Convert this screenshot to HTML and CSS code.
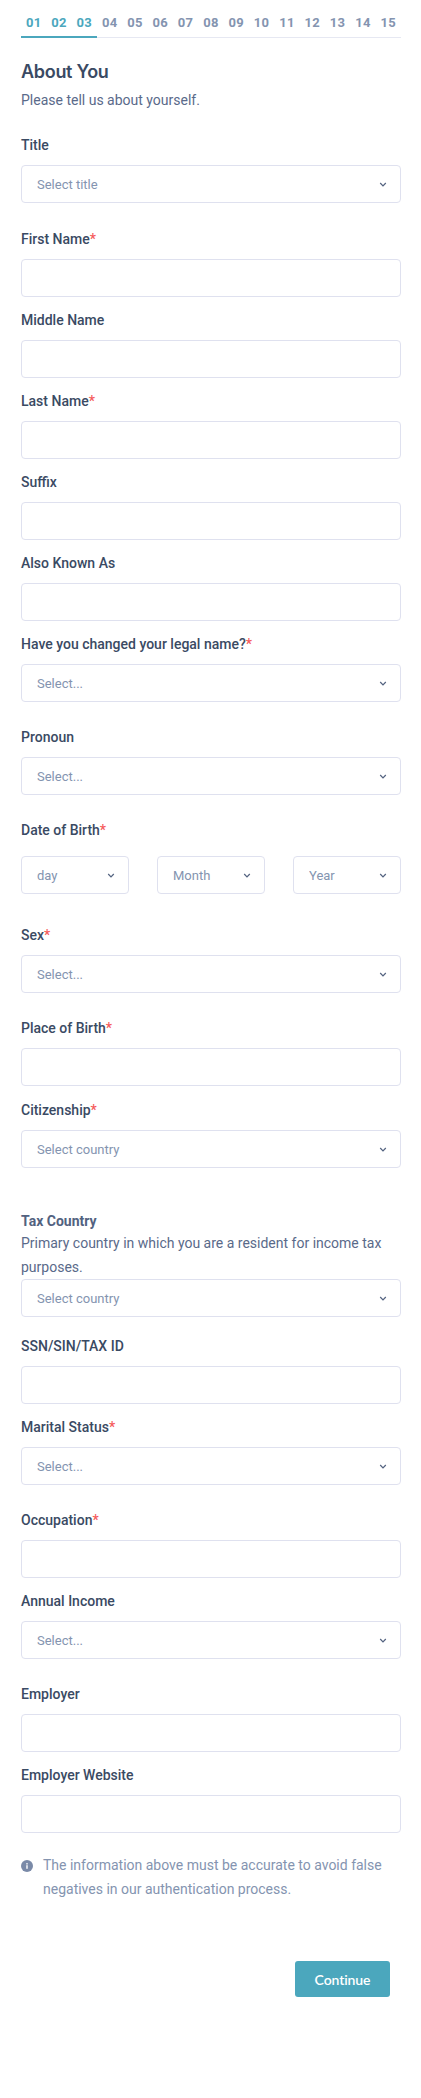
FILE: index.html
```html
<!DOCTYPE html>
<html lang="en">
<head>
    <meta charset="UTF-8">
    <meta name="viewport" content="width=device-width, initial-scale=1.0">
    <title>About You</title>
    <link rel="stylesheet" href="styles.css">
</head>
<body>
    <svg class="sprite" width="0" height="0">
        <symbol id="chevron" viewBox="0 0 8 5">
            <path d="M1.2 1l2.8 2.8 2.8-2.8" fill="none" stroke="currentColor" stroke-width="1.2"/>
        </symbol>
    </svg>

    <div class="page">
        <div class="steps">
            <span class="step done">01</span>
            <span class="step done">02</span>
            <span class="step done">03</span>
            <span class="step">04</span>
            <span class="step">05</span>
            <span class="step">06</span>
            <span class="step">07</span>
            <span class="step">08</span>
            <span class="step">09</span>
            <span class="step">10</span>
            <span class="step">11</span>
            <span class="step">12</span>
            <span class="step">13</span>
            <span class="step">14</span>
            <span class="step">15</span>
        </div>

        <h1>About You</h1>
        <p class="intro">Please tell us about yourself.</p>

        <form>
            <div class="field pick title-field">
                <label>Title</label>
                <div class="select">
                    <select><option>Select title</option></select>
                    <svg class="chevron"><use href="#chevron"/></svg>
                </div>
            </div>

            <div class="field">
                <label>First Name<span class="req">*</span></label>
                <input type="text">
            </div>

            <div class="field">
                <label>Middle Name</label>
                <input type="text">
            </div>

            <div class="field">
                <label>Last Name<span class="req">*</span></label>
                <input type="text">
            </div>

            <div class="field">
                <label>Suffix</label>
                <input type="text">
            </div>

            <div class="field">
                <label>Also Known As</label>
                <input type="text">
            </div>

            <div class="field pick">
                <label>Have you changed your legal name?<span class="req">*</span></label>
                <div class="select">
                    <select><option>Select...</option></select>
                    <svg class="chevron"><use href="#chevron"/></svg>
                </div>
            </div>

            <div class="field pick">
                <label>Pronoun</label>
                <div class="select">
                    <select><option>Select...</option></select>
                    <svg class="chevron"><use href="#chevron"/></svg>
                </div>
            </div>

            <div class="field date-field">
                <label>Date of Birth<span class="req">*</span></label>
                <div class="date-row">
                    <div class="select">
                        <select><option>day</option></select>
                        <svg class="chevron"><use href="#chevron"/></svg>
                    </div>
                    <div class="select">
                        <select><option>Month</option></select>
                        <svg class="chevron"><use href="#chevron"/></svg>
                    </div>
                    <div class="select">
                        <select><option>Year</option></select>
                        <svg class="chevron"><use href="#chevron"/></svg>
                    </div>
                </div>
            </div>

            <div class="field pick">
                <label>Sex<span class="req">*</span></label>
                <div class="select">
                    <select><option>Select...</option></select>
                    <svg class="chevron"><use href="#chevron"/></svg>
                </div>
            </div>

            <div class="field birth-field">
                <label>Place of Birth<span class="req">*</span></label>
                <input type="text">
            </div>

            <div class="field citizenship">
                <label>Citizenship<span class="req">*</span></label>
                <div class="select">
                    <select><option>Select country</option></select>
                    <svg class="chevron"><use href="#chevron"/></svg>
                </div>
            </div>

            <div class="field tax">
                <label class="tax-label">Tax Country</label>
                <p class="hint">Primary country in which you are a resident for income tax purposes.</p>
                <div class="select">
                    <select><option>Select country</option></select>
                    <svg class="chevron"><use href="#chevron"/></svg>
                </div>
            </div>

            <div class="field">
                <label>SSN/SIN/TAX ID</label>
                <input type="text">
            </div>

            <div class="field pick">
                <label>Marital Status<span class="req">*</span></label>
                <div class="select">
                    <select><option>Select...</option></select>
                    <svg class="chevron"><use href="#chevron"/></svg>
                </div>
            </div>

            <div class="field">
                <label>Occupation<span class="req">*</span></label>
                <input type="text">
            </div>

            <div class="field pick">
                <label>Annual Income</label>
                <div class="select">
                    <select><option>Select...</option></select>
                    <svg class="chevron"><use href="#chevron"/></svg>
                </div>
            </div>

            <div class="field">
                <label>Employer</label>
                <input type="text">
            </div>

            <div class="field">
                <label>Employer Website</label>
                <input type="text">
            </div>

            <div class="notice">
                <svg class="info" viewBox="0 0 12 12">
                    <circle cx="6" cy="6" r="6" fill="#7a8aa8"/>
                    <rect x="5.3" y="5.2" width="1.4" height="3.6" fill="#fff"/>
                    <rect x="5.3" y="3.1" width="1.4" height="1.4" fill="#fff"/>
                </svg>
                <p>The information above must be accurate to avoid false negatives in our authentication process.</p>
            </div>

            <div class="actions">
                <button type="button">Continue</button>
            </div>
        </form>
    </div>
</body>
</html>
```

FILE: styles.css
```css
* {
    box-sizing: border-box;
}

body {
    margin: 0;
    font-family: Roboto, sans-serif;
    color: #3a4a63;
    background-color: #ffffff;
}

.sprite {
    position: absolute;
}

.page {
    padding: 0 20px 100px 21px;
}

/* Step tabs */
.steps {
    display: flex;
    height: 38px;
    padding-top: 14px;
    border-bottom: 1px solid #e6e8f2;
}

.step {
    flex: 1;
    height: 24px;
    font-size: 13px;
    font-weight: 700;
    line-height: 18px;
    letter-spacing: 0.3px;
    text-align: center;
    color: #8494b0;
}

.step.done {
    color: #4ba7bd;
    border-bottom: 2px solid #4ba7bd;
}

h1 {
    margin: 23px 0 0;
    font-family: Inter, sans-serif;
    font-size: 18px;
    font-weight: 600;
    line-height: 22px;
    letter-spacing: -0.3px;
    color: #3a4a63;
}

.intro {
    margin: 6px 0 0;
    font-size: 14px;
    line-height: 22px;
    color: #5a6a8a;
}

form {
    margin-top: 24px;
}

/* Fields */
.field {
    margin-bottom: 13px;
}

.field.pick {
    margin-bottom: 25px;
}

.field.title-field {
    margin-bottom: 26px;
}

.field.date-field {
    margin-bottom: 31px;
}

.date-field label {
    margin-bottom: 16px;
}

.field.birth-field {
    margin-bottom: 14px;
}

.field.citizenship {
    margin-bottom: 43px;
}

.field.tax {
    margin-bottom: 19px;
}

label {
    display: block;
    margin-bottom: 10px;
    font-size: 14px;
    font-weight: 500;
    line-height: 20px;
}

.req {
    color: #f55a5a;
}

.tax-label {
    margin-bottom: 0;
    font-weight: 700;
    color: #52627f;
}

.hint {
    margin: 0;
    font-size: 14px;
    line-height: 24px;
    color: #5a6a8a;
}

input,
select {
    display: block;
    width: 100%;
    height: 38px;
    padding: 0 15px;
    font-family: Roboto, sans-serif;
    font-size: 13px;
    color: #8494b0;
    background-color: #ffffff;
    border: 1px solid #dfe1ef;
    border-radius: 4px;
    appearance: none;
}

.select {
    position: relative;
}

.chevron {
    position: absolute;
    top: 16.5px;
    right: 14.5px;
    width: 8px;
    height: 5px;
    color: #52627f;
}

.date-row {
    display: flex;
    justify-content: space-between;
}

.date-row .select {
    width: 108px;
}

/* Footer */
.notice {
    display: flex;
    gap: 10px;
    margin-top: 20px;
    font-size: 14px;
    line-height: 24px;
    color: #8494b0;
}

.notice p {
    margin: 0;
}

.info {
    flex: none;
    width: 12px;
    height: 12px;
    margin-top: 7px;
}

.actions {
    display: flex;
    justify-content: flex-end;
    margin-top: 60px;
    padding-right: 11px;
}

button {
    width: 95px;
    height: 36px;
    font-family: Lato, sans-serif;
    font-size: 14px;
    font-weight: 600;
    letter-spacing: -0.1px;
    color: #ffffff;
    background-color: #4ba7bd;
    border: none;
    border-radius: 3px;
    cursor: pointer;
}
```
